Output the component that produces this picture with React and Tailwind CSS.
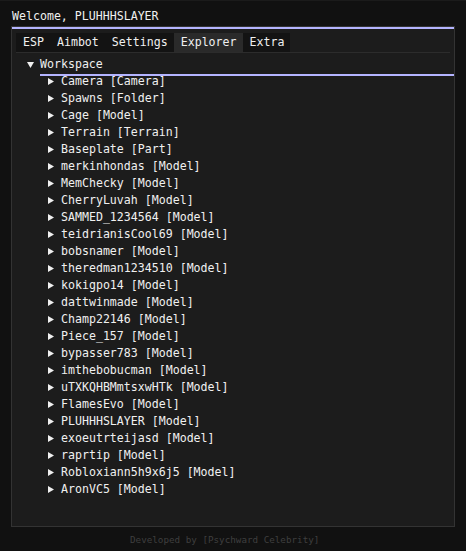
const children = [
  "Camera [Camera]",
  "Spawns [Folder]",
  "Cage [Model]",
  "Terrain [Terrain]",
  "Baseplate [Part]",
  "merkinhondas [Model]",
  "MemChecky [Model]",
  "CherryLuvah [Model]",
  "SAMMED_1234564 [Model]",
  "teidrianisCool69 [Model]",
  "bobsnamer [Model]",
  "theredman1234510 [Model]",
  "kokigpo14 [Model]",
  "dattwinmade [Model]",
  "Champ22146 [Model]",
  "Piece_157 [Model]",
  "bypasser783 [Model]",
  "imthebobucman [Model]",
  "uTXKQHBMmtsxwHTk [Model]",
  "FlamesEvo [Model]",
  "PLUHHHSLAYER [Model]",
  "exoeutrteijasd [Model]",
  "raprtip [Model]",
  "Robloxiann5h9x6j5 [Model]",
  "AronVC5 [Model]",
];

const tabs = ["ESP", "Aimbot", "Settings", "Explorer", "Extra"];

const ArrowRight = () => (
  <svg width="6" height="7" viewBox="0 0 6 7" className="shrink-0">
    <path d="M0 0 L6 3.5 L0 7 Z" fill="#f0f0f0" />
  </svg>
);

const ArrowDown = () => (
  <svg width="7" height="6" viewBox="0 0 7 6" className="shrink-0">
    <path d="M0 0 L7 0 L3.5 6 Z" fill="#f0f0f0" />
  </svg>
);

export default function App() {
  return (
    <div
      className="w-[466px] h-[551px] bg-[#111111] border-t border-[#1b1b1b] text-[#f0f0f0] overflow-hidden"
      style={{ fontFamily: '"DejaVu Sans Mono", "Liberation Mono", monospace' }}
    >
      {/* Title */}
      <div className="h-[25px] pl-3 pt-[7px] text-[11.6px] leading-[17px] whitespace-pre">
        Welcome, PLUHHHSLAYER
      </div>

      {/* Window */}
      <div className="relative ml-[11px] w-[444px] h-[501px] border border-[#333333] bg-[#1c1c1c] text-[11.6px]">
        <div className="h-[2px] bg-[#b4b4ff]" />
        <div className="px-[4px] pt-[4px]">
          {/* Tabs */}
          <div className="flex h-[19px] border-b border-[#2c2c2c] box-content">
            {tabs.map((t) => (
              <div
                key={t}
                className={`pl-[7px] pr-[6px] leading-[19px] whitespace-pre ${
                  t === "Explorer" ? "bg-[#2a2a2a]" : "bg-[#131313]"
                }`}
              >
                {t}
              </div>
            ))}
          </div>

          {/* Tree */}
          <div className="mt-[3px]">
            <div className="flex items-center h-[17px] pl-[11px]">
              <ArrowDown />
              <span className="ml-[6px] leading-[17px] whitespace-pre">Workspace</span>
            </div>
            {children.map((c) => (
              <div key={c} className="flex items-center h-[17px] pl-[32px]">
                <ArrowRight />
                <span className="ml-[7px] leading-[17px] whitespace-pre">{c}</span>
              </div>
            ))}
          </div>
        </div>

        {/* selection highlight line */}
        <div className="absolute left-[28px] right-0 top-[47px] h-[2px] bg-[#b4b4ff]" />
      </div>

      {/* Footer */}
      <div className="pl-[130px] pt-[7px] text-[9.25px] leading-[12px] text-[#3f3f3f] whitespace-pre">
        Developed by [Psychward Celebrity]
      </div>
    </div>
  );
}
